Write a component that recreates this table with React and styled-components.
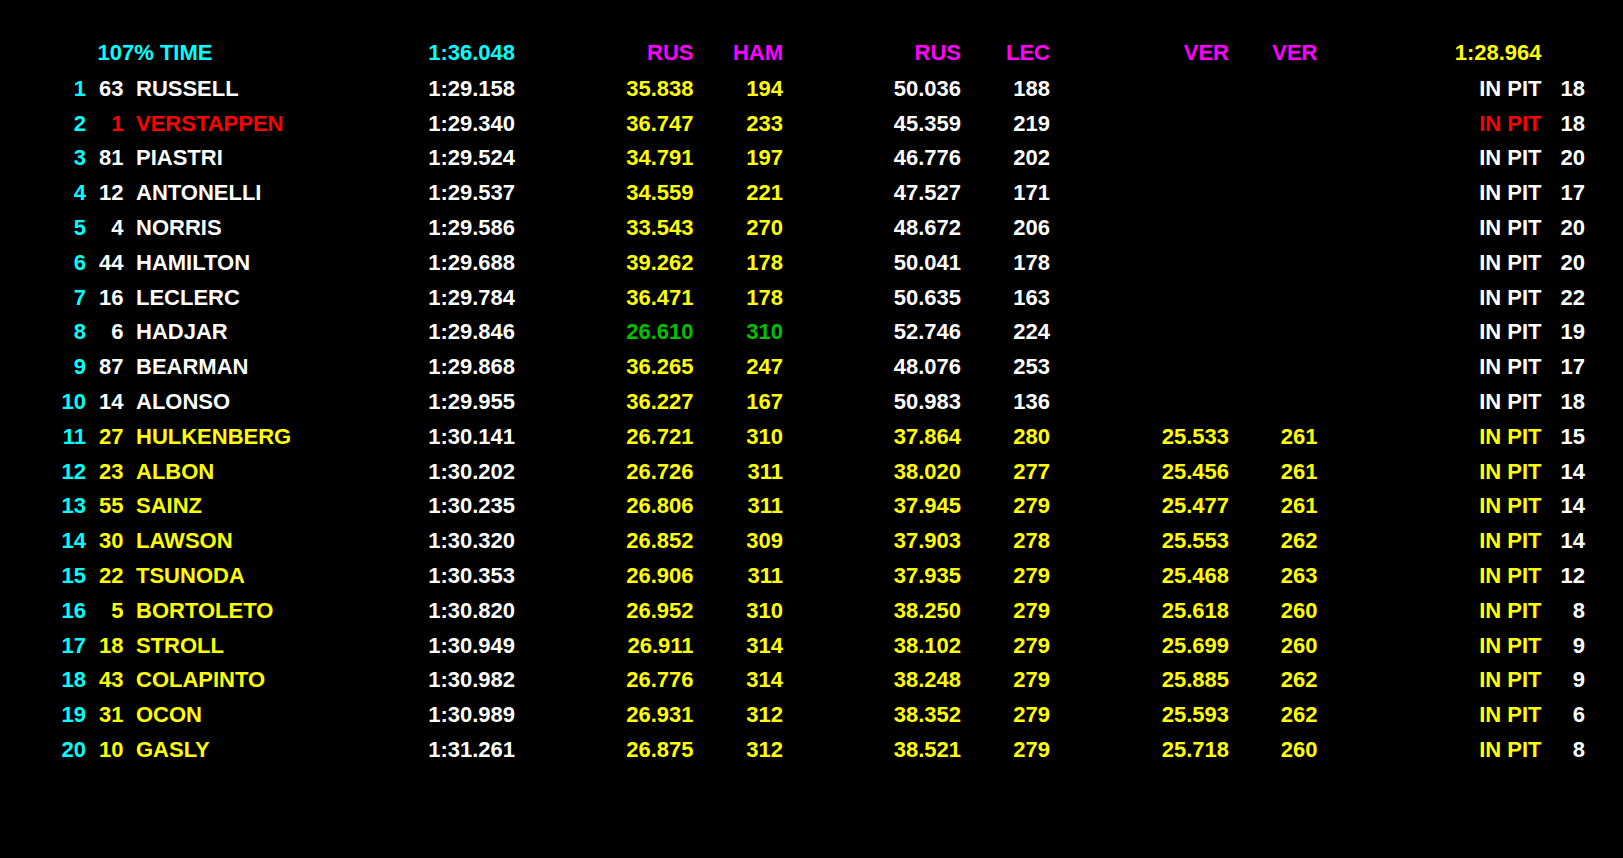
import React from 'react';
import styled, { createGlobalStyle } from 'styled-components';

const COLORS = {
  cyan: '#00ffff',
  white: '#ffffff',
  yellow: '#ffff00',
  magenta: '#ff00ff',
  red: '#ff0000',
  green: '#00c000',
};

// widths of: pos, num, name, lap, s1, sp1, s2, sp2, s3, sp3, status, laps
const COLUMNS =
  '86px 37.5px 296.5px 95px 178.5px 89.5px 178px 89px 179px 88.5px 224px 43.5px';

const GlobalStyle = createGlobalStyle`
  html, body {
    margin: 0;
    padding: 0;
    background: #000;
  }
  body {
    font-family: "Liberation Sans", Arial, sans-serif;
    font-weight: bold;
    font-size: 22px;
  }
`;

const Screen = styled.div`
  width: 1623px;
  height: 858px;
  background: #000;
  padding-top: 36.2px;
  box-sizing: border-box;
  overflow: hidden;
`;

const Row = styled.div`
  display: grid;
  grid-template-columns: ${COLUMNS};
  height: ${({ $header }) => ($header ? '35.7px' : '34.8px')};
  line-height: 34.8px;
  white-space: nowrap;
`;

const Cell = styled.div`
  color: ${({ $color }) => COLORS[$color || 'white']};
  text-align: ${({ $left }) => ($left ? 'left' : 'right')};
`;

const NameCell = styled(Cell)`
  padding-left: 12.5px;
`;

const TitleCell = styled(Cell)`
  grid-column: 2 / span 2;
  padding-left: 11.5px;
`;

const HEADS = [
  { text: 'RUS', col: 5 },
  { text: 'HAM', col: 6 },
  { text: 'RUS', col: 7 },
  { text: 'LEC', col: 8 },
  { text: 'VER', col: 9 },
  { text: 'VER', col: 10 },
];

const DRIVERS = [
  [1, 63, 'RUSSELL', '1:29.158', '35.838', '194', '50.036', '188', '', '', 18],
  [2, 1, 'VERSTAPPEN', '1:29.340', '36.747', '233', '45.359', '219', '', '', 18],
  [3, 81, 'PIASTRI', '1:29.524', '34.791', '197', '46.776', '202', '', '', 20],
  [4, 12, 'ANTONELLI', '1:29.537', '34.559', '221', '47.527', '171', '', '', 17],
  [5, 4, 'NORRIS', '1:29.586', '33.543', '270', '48.672', '206', '', '', 20],
  [6, 44, 'HAMILTON', '1:29.688', '39.262', '178', '50.041', '178', '', '', 20],
  [7, 16, 'LECLERC', '1:29.784', '36.471', '178', '50.635', '163', '', '', 22],
  [8, 6, 'HADJAR', '1:29.846', '26.610', '310', '52.746', '224', '', '', 19],
  [9, 87, 'BEARMAN', '1:29.868', '36.265', '247', '48.076', '253', '', '', 17],
  [10, 14, 'ALONSO', '1:29.955', '36.227', '167', '50.983', '136', '', '', 18],
  [11, 27, 'HULKENBERG', '1:30.141', '26.721', '310', '37.864', '280', '25.533', '261', 15],
  [12, 23, 'ALBON', '1:30.202', '26.726', '311', '38.020', '277', '25.456', '261', 14],
  [13, 55, 'SAINZ', '1:30.235', '26.806', '311', '37.945', '279', '25.477', '261', 14],
  [14, 30, 'LAWSON', '1:30.320', '26.852', '309', '37.903', '278', '25.553', '262', 14],
  [15, 22, 'TSUNODA', '1:30.353', '26.906', '311', '37.935', '279', '25.468', '263', 12],
  [16, 5, 'BORTOLETO', '1:30.820', '26.952', '310', '38.250', '279', '25.618', '260', 8],
  [17, 18, 'STROLL', '1:30.949', '26.911', '314', '38.102', '279', '25.699', '260', 9],
  [18, 43, 'COLAPINTO', '1:30.982', '26.776', '314', '38.248', '279', '25.885', '262', 9],
  [19, 31, 'OCON', '1:30.989', '26.931', '312', '38.352', '279', '25.593', '262', 6],
  [20, 10, 'GASLY', '1:31.261', '26.875', '312', '38.521', '279', '25.718', '260', 8],
];

// sector 1 personal best gets green
const BEST_S1 = 8;

function DriverRow({ d }) {
  const [pos, num, name, lap, s1, sp1, s2, sp2, s3, sp3, laps] = d;
  const eliminated = pos > 10;
  const ident = pos === 2 ? 'red' : eliminated ? 'yellow' : 'white';
  const s1Color = pos === BEST_S1 ? 'green' : 'yellow';
  const s2Color = eliminated ? 'yellow' : 'white';

  return (
    <Row>
      <Cell $color="cyan">{pos}</Cell>
      <Cell $color={ident}>{num}</Cell>
      <NameCell $color={ident} $left>
        {name}
      </NameCell>
      <Cell>{lap}</Cell>
      <Cell $color={s1Color}>{s1}</Cell>
      <Cell $color={s1Color}>{sp1}</Cell>
      <Cell $color={s2Color}>{s2}</Cell>
      <Cell $color={s2Color}>{sp2}</Cell>
      <Cell $color="yellow">{s3}</Cell>
      <Cell $color="yellow">{sp3}</Cell>
      <Cell $color={ident}>IN PIT</Cell>
      <Cell>{laps}</Cell>
    </Row>
  );
}

export default function App() {
  return (
    <>
      <GlobalStyle />
      <Screen>
        <Row $header>
          <TitleCell $color="cyan" $left>
            107% TIME
          </TitleCell>
          <Cell $color="cyan" style={{ gridColumn: 4 }}>
            1:36.048
          </Cell>
          {HEADS.map(h => (
            <Cell key={h.col} $color="magenta" style={{ gridColumn: h.col }}>
              {h.text}
            </Cell>
          ))}
          <Cell $color="yellow" style={{ gridColumn: 11 }}>
            1:28.964
          </Cell>
        </Row>
        {DRIVERS.map(d => (
          <DriverRow key={d[0]} d={d} />
        ))}
      </Screen>
    </>
  );
}
